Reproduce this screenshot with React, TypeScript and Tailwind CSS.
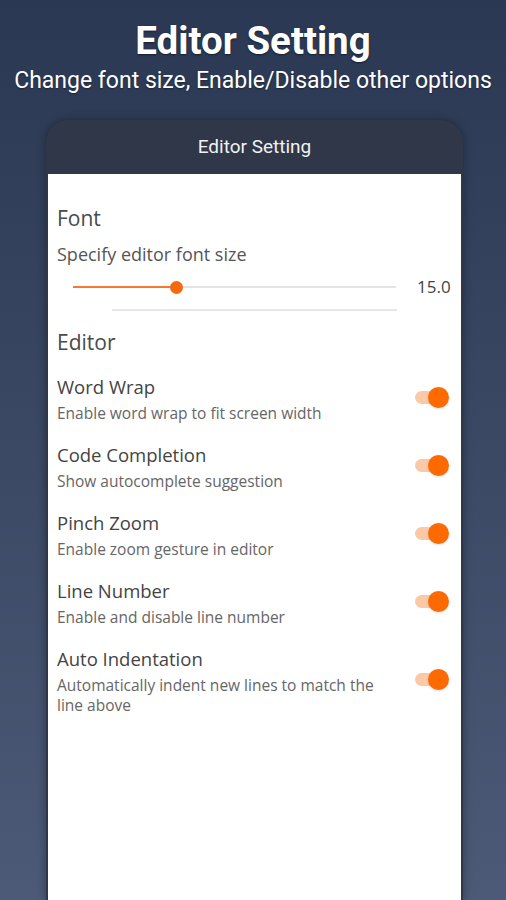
import { useState } from 'react';

const items = [
  { title: 'Word Wrap', desc: 'Enable word wrap to fit screen width' },
  { title: 'Code Completion', desc: 'Show autocomplete suggestion' },
  { title: 'Pinch Zoom', desc: 'Enable zoom gesture in editor' },
  { title: 'Line Number', desc: 'Enable and disable line number' },
  { title: 'Auto Indentation', desc: 'Automatically indent new lines to match the line above' },
];

function Toggle({ on, onClick }: { on: boolean; onClick: () => void }) {
  return (
    <button onClick={onClick} className="relative w-[34px] h-[21px] shrink-0">
      <span className={`absolute left-[0px] top-[4px] w-[30px] h-[13px] rounded-full ${on ? 'bg-[#fbc9a8]' : 'bg-gray-300'}`}></span>
      <span className={`absolute top-0 w-[21px] h-[21px] rounded-full shadow-sm ${on ? 'right-0 bg-[#ff6a00]' : 'left-0 bg-gray-100'}`}></span>
    </button>
  );
}

export default function App() {
  const [toggles, setToggles] = useState([true, true, true, true, true]);

  return (
    <div className="w-full h-[900px] overflow-hidden flex flex-col items-center bg-gradient-to-b from-[#2a3853] to-[#4c5a77] font-['Roboto',sans-serif]">
      <h1 className="mt-[19px] text-[38.5px] leading-[44px] font-bold text-white [text-shadow:0_1px_2px_rgba(0,0,0,0.5)]">Editor Setting</h1>
      <p className="mt-[4px] text-[23px] leading-[28px] text-white whitespace-nowrap [text-shadow:0_1px_2px_rgba(0,0,0,0.4)]">Change font size, Enable/Disable other options</p>

      <div className="mt-[25px] ml-[3px] w-[417px] flex-1 flex flex-col rounded-t-[22px] bg-[#2f3749] px-[2px] shadow-[0_0_8px_rgba(0,0,0,0.35)]">
        <div className="h-[54px] flex items-center justify-center text-[19px] text-[#f1f1f1]">Editor Setting</div>
        <div className="flex-1 bg-white px-[9px] font-['Open_Sans',sans-serif] text-[#444]">
          <div className="mt-[30px] text-[21px] leading-[28px] text-[#4a4a4a]">Font</div>
          <div className="mt-[10px] text-[18px] leading-[24px] text-[#555]">Specify editor font size</div>
          <div className="mt-[11px] h-[20px] flex items-center">
            <div className="relative ml-[16px] w-[323px] h-[14px] flex items-center">
              <div className="w-full h-[2px] bg-[#e3e3e3]"></div>
              <div className="absolute left-0 w-[104px] h-[2px] bg-[#f47a2e]"></div>
              <div className="absolute left-[97px] w-[13px] h-[13px] rounded-full bg-[#f56a10]"></div>
            </div>
            <div className="ml-[21px] text-[17px] leading-[20px] text-[#444]">15.0</div>
          </div>
          <div className="mt-[12px] ml-[55px] w-[285px] h-[2px] bg-[#e6e6e6]"></div>

          <div className="mt-[17px] text-[21px] leading-[28px] text-[#4a4a4a]">Editor</div>

          <div className="mt-[18px] flex flex-col gap-[19px]">
            {items.map((it, i) => (
              <div key={it.title} className="flex items-center">
                <div className="flex-1 pr-[22px]">
                  <div className="text-[18.5px] leading-[26px] text-[#444]">{it.title}</div>
                  <div className="mt-[3px] text-[15.5px] leading-[20px] text-[#666]">{it.desc}</div>
                </div>
                <div className="mr-[3px] mt-[3px]">
                  <Toggle on={toggles[i]} onClick={() => setToggles(t => t.map((v, j) => (j === i ? !v : v)))} />
                </div>
              </div>
            ))}
          </div>
        </div>
      </div>
    </div>
  );
}
